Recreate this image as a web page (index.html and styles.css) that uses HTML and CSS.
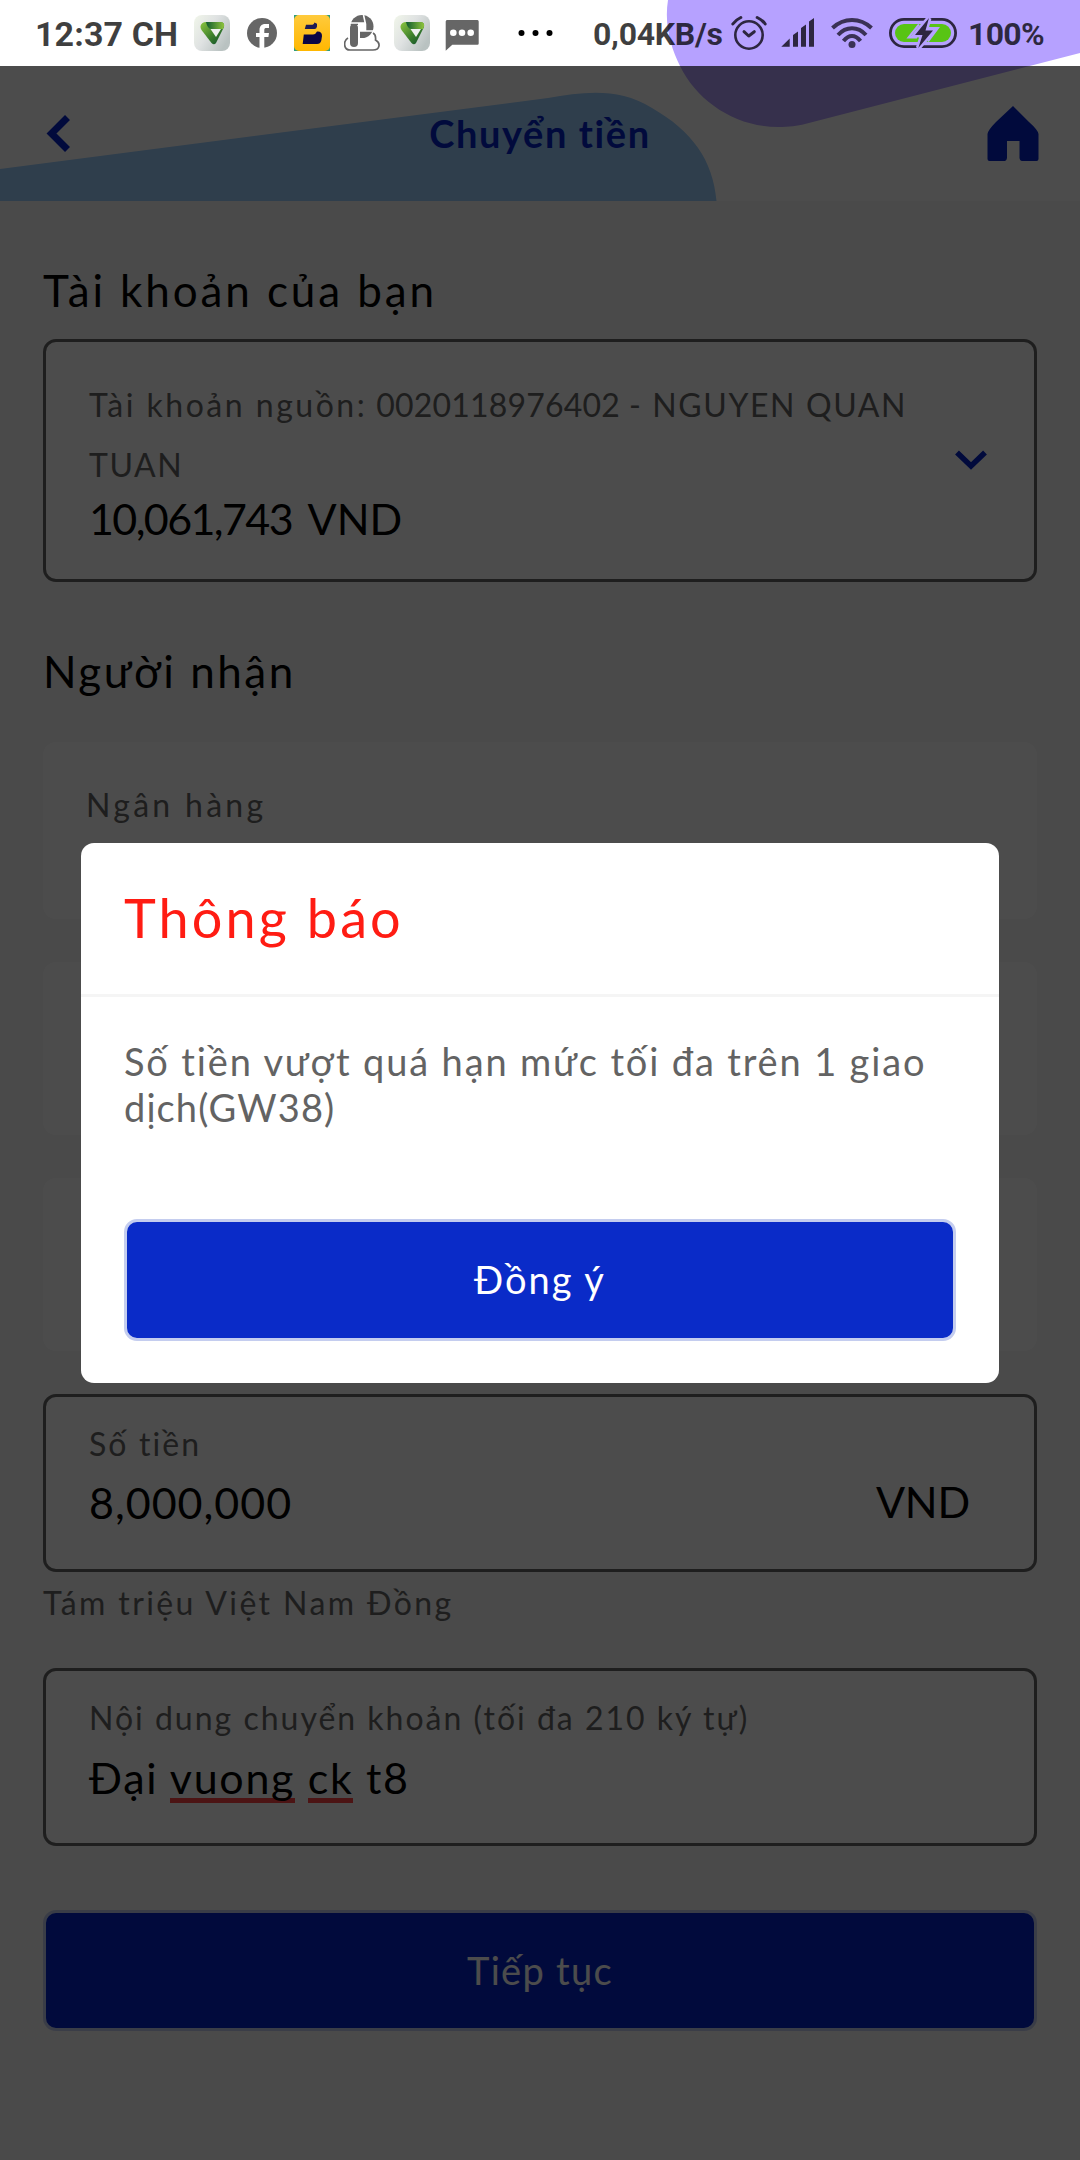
FILE: index.html
```html
<!DOCTYPE html>
<html lang="vi">

<head>
    <meta charset="UTF-8">
    <meta name="viewport" content="width=device-width, initial-scale=1.0">
    <title>Chuyển tiền</title>
    <link rel="stylesheet" href="styles.css">
</head>

<body>
    <svg class="shapes" viewBox="0 0 1080 201">
        <path fill="#9dcffe" d="M0 169 L548 98 C584 92 618 87 652 108 C692 131 713 160 716.500 201 H0 Z" />
        <path fill="#b6a1ff" d="M668 0 C664 25 671 48 680 66 C697 101 735 127 778 127 C790 127 797 126 805 124 L1080 53 V0 Z" />
    </svg>

    <div class="status-bar">
        <span class="time">12:37 CH</span>
        <div class="notifications">
            <svg width="36" height="36">
                <defs>
                    <linearGradient id="plate" x1="0" y1="0" x2="1" y2="0.6">
                        <stop offset="0" stop-color="#f1f6ea" />
                        <stop offset="0.5" stop-color="#dfe2e2" />
                        <stop offset="1" stop-color="#b9c2c1" />
                    </linearGradient>
                    <linearGradient id="leaf" x1="0" y1="0" x2="1" y2="1">
                        <stop offset="0" stop-color="#8cc63f" />
                        <stop offset="0.55" stop-color="#3c7f2c" />
                        <stop offset="1" stop-color="#0b4a2d" />
                    </linearGradient>
                    <linearGradient id="leafTop" x1="0" y1="0" x2="1" y2="0">
                        <stop offset="0" stop-color="#0f5a30" />
                        <stop offset="1" stop-color="#8fc43c" />
                    </linearGradient>
                </defs>
                <g id="vcb">
                    <rect width="36" height="36" rx="8" fill="url(#plate)" />
                    <path fill="url(#leaf)" d="M8.500 8 Q10 7 12 7 H26 Q31 7 30 12 L22 28 Q20 30.500 17.500 28 L7.500 15 Q5 11 8.500 8 Z" />
                    <path fill="url(#leafTop)" d="M12 7 H27 Q31 7.500 29.800 12 L29 14 H17 Q13.500 13.500 12 7 Z" />
                    <path fill="#eef0f0" d="M16.500 14 H27 L22 22 Z" />
                </g>
            </svg>
            <svg width="36" height="36">
                <circle cx="18" cy="18" r="15" fill="#666" />
                <path fill="#fff" d="M15.500 33.500 V22 H12 V18 H15.500 V15 C15.500 11 18 9 21 9 H25 V13 H22.500 C21 13 20.300 13.500 20.300 15 V18 H25 L24.400 22 H20.300 V33.500 Z" />
            </svg>
            <svg width="36" height="36">
                <defs>
                    <linearGradient id="amber" x1="0" y1="0" x2="0" y2="1">
                        <stop offset="0" stop-color="#ffca3c" />
                        <stop offset="1" stop-color="#ffb700" />
                    </linearGradient>
                </defs>
                <rect width="36" height="36" fill="#2f9e7c" />
                <rect width="36" height="36" rx="5" fill="url(#amber)" />
                <path fill="#1c1a55" d="M12 9.800 H18.500 Q20 9.500 20.500 7.500 L23 8.800 V11.500 Q22.500 14 20.500 14 H10.800 Z" />
                <path fill="#0a0645" d="M9.800 19.500 H19 Q22 19 23 16.500 Q28 16 28 21 L27.300 25.500 Q26.500 29 23 29 H8.700 Z" />
            </svg>
            <svg width="36" height="36">
                <circle cx="18" cy="11.500" r="11.500" fill="#666" />
                <path fill="#fff" d="M14 8 H21.500 V16 H14 Z M3 10 H16 V24 H3 Z" />
                <path stroke="#fff" stroke-width="1.600" fill="none" d="M6 8 H22 M19.500 0 L21.500 9 V16 M14 16 H30" />
                <rect x="6" y="9" width="8" height="23" rx="4" fill="#666" />
                <path stroke="#666" stroke-width="1.700" fill="none" d="M4 23 C-1 26 -0.500 35 6 35 H29 C36 35 37 28 31.500 25 C32 21 31 19 29 18" />
            </svg>
            <svg width="36" height="36">
                <use href="#vcb" />
            </svg>
            <svg width="36" height="36">
                <path fill="#666" d="M3 5 H33.500 Q34.700 5 34.700 6.500 V28.500 Q34.700 29.700 33.500 29.700 H8.300 L1.700 35.700 V6.500 Q1.700 5 3 5 Z" />
                <g fill="#fff">
                    <circle cx="9.300" cy="17.800" r="3.300" />
                    <circle cx="18" cy="17.800" r="3.300" />
                    <circle cx="26.700" cy="17.800" r="3.300" />
                </g>
            </svg>
        </div>
        <svg class="dots" width="42" height="12">
            <circle cx="7.500" cy="6" r="3" />
            <circle cx="21.500" cy="6" r="3" />
            <circle cx="35.500" cy="6" r="3" />
        </svg>
        <span class="speed">0,04KB/s</span>
        <svg class="alarm" width="38" height="36" fill="none">
            <circle cx="19" cy="20" r="13.700" stroke-width="2.600" />
            <path stroke-width="3" d="M14 16.700 L18.700 21 L24.300 16.700" />
            <path stroke-width="3" d="M2.800 9 Q5.500 5 10.800 2.500 M27.200 2.500 Q32.500 5 35.200 9" />
        </svg>
        <svg class="signal" width="34" height="36">
            <path d="M0.300 31.700 L8.700 23.500 V31.700 Z M12 20 L17 16.500 V31.700 H12 Z M20 13 L25 9.500 V31.700 H20 Z M28 6.500 L33 3 V31.700 H28 Z" />
        </svg>
        <svg class="wifi" width="44" height="36" fill="none">
            <path d="M2.500 13 Q11 5 22 5 T41.500 13 M8 20 Q14 13.300 22 13.300 T36 20 M13.500 26 Q17.500 21 22 21 T30.500 26" />
            <circle cx="22" cy="29.500" r="3.500" />
        </svg>
        <svg class="battery" width="72" height="36">
            <rect x="3.400" y="4.400" width="65.200" height="27.200" rx="13.600" fill="none" stroke="#2d2640" stroke-width="2.800" />
            <rect x="8" y="9" width="56" height="18" rx="9" fill="#58c414" />
            <path fill="none" stroke="#b6a1ff" stroke-width="2" d="M32 9.500 L21.500 22.500 H30 M42 13 H51 L41 26.500" />
            <path fill="#2d2640" stroke="#b6a1ff" stroke-width="5" paint-order="stroke" d="M42 3 L28 20 H35.500 L31.300 33 L46 15.500 H38.500 Z" />
        </svg>
        <span class="percent">100%</span>
    </div>

    <header class="header">
        <svg class="back" width="30" height="40">
            <path d="M23.500 3.500 L7.500 19.500 L23.500 35.500" />
        </svg>
        <h1>Chuyển tiền</h1>
        <svg class="home" width="52" height="56">
            <path d="M26 0 L42 16 Q51 24 51.500 28 V53 Q51.500 55 49.500 55 H35 Q33 55 32.500 52 V35 H20 V52 Q19.500 55 18 55 H2.500 Q0.500 55 0.500 53 V28 Q1 24 9 16 Z" />
        </svg>
    </header>

    <main class="content">
        <h2 class="title-account">Tài khoản của bạn</h2>
        <div class="box account">
            <div>
                <div class="label account-name">
                    <div class="line">
                        <span class="source">Tài khoản nguồn:</span>
                        <span class="number">0020118976402</span>
                        <span>- NGUYEN QUAN</span>
                    </div>
                    <div class="line"><span>TUAN</span></div>
                </div>
                <div class="value balance"><span class="digits">10,061,743</span> <span>VND</span></div>
            </div>
            <svg class="chevron" width="34" height="24">
                <path d="M2 4.500 L16 18 L30 4.500" />
            </svg>
        </div>

        <h2 class="title-receiver">Người nhận</h2>
        <div class="cards">
            <div class="card bank">
                <div class="label">Ngân hàng</div>
            </div>
            <div class="card"></div>
            <div class="card"></div>
        </div>

        <div class="box field">
            <div class="label amount-label">Số tiền</div>
            <div class="row">
                <span class="value amount">8,000,000</span>
                <span class="value currency">VND</span>
            </div>
        </div>
        <p class="label in-words">Tám triệu Việt Nam Đồng</p>

        <div class="box field">
            <div class="label note-label">Nội dung chuyển khoản (tối đa 210 ký tự)</div>
            <div class="value note">Đại <span class="typo">vuong</span> <span class="typo">ck</span> t8</div>
        </div>

        <button class="btn btn-next">Tiếp tục</button>
    </main>

    <div class="overlay"></div>

    <div class="modal">
        <div class="modal-title">Thông báo</div>
        <div class="modal-body">
            <p>Số tiền vượt quá hạn mức tối đa trên 1 giao</p>
            <p class="code">dịch(GW38)</p>
            <button class="btn btn-ok">Đồng ý</button>
        </div>
    </div>
</body>

</html>
```

FILE: styles.css
```css
* {
    box-sizing: border-box;
}

body {
    position: relative;
    margin: 0;
    width: 1080px;
    height: 2160px;
    overflow: hidden;
    background-color: #f7f7f7;
    background-image: linear-gradient(#fff, #fff);
    background-size: 100% 201px;
    background-repeat: no-repeat;
    font-family: Lato, "Open Sans", sans-serif;
}

h1,
h2,
p {
    margin: 0;
    font-weight: 400;
}

svg {
    display: block;
    flex-shrink: 0;
}

.shapes {
    position: absolute;
    top: 0;
    left: 0;
    width: 1080px;
    height: 201px;
}

/* status bar */
.status-bar {
    position: relative;
    display: flex;
    align-items: center;
    height: 66px;
    font-family: Roboto, sans-serif;
    font-weight: 700;
    color: rgba(0, 0, 0, 0.75);
    white-space: nowrap;
}

.time {
    width: 194px;
    padding: 2px 0 0 35px;
    font-size: 34px;
    letter-spacing: 0.1px;
}

.notifications {
    display: flex;
    gap: 14px;
}

.dots {
    margin-left: 34px;
}

.speed {
    width: 137px;
    margin-left: 37px;
    padding-top: 2px;
    font-size: 32px;
    letter-spacing: -0.3px;
}

.alarm {
    stroke: #2d2640;
    stroke-linecap: round;
    stroke-linejoin: round;
}

.signal {
    margin-left: 13px;
    fill: #2d2640;
}

.wifi {
    margin-left: 15px;
    stroke: #3a3155;
    stroke-width: 4;
}

.wifi circle {
    fill: #3a3155;
    stroke: none;
}

.battery {
    margin-left: 13px;
}

.percent {
    margin-left: 9px;
    padding-top: 2px;
    font-size: 32px;
    letter-spacing: -0.7px;
}

/* header */
.header {
    position: relative;
    display: flex;
    align-items: center;
    justify-content: space-between;
    height: 135px;
    padding: 0 41px 0 44px;
}

.header h1 {
    margin: -2px 0 0 19px;
    font-size: 38px;
    font-weight: 700;
    letter-spacing: 1.6px;
    color: #0424c8;
}

.back,
.chevron {
    fill: none;
    stroke: #0424c8;
}

.back {
    stroke-width: 7;
}

.chevron {
    stroke-width: 5.5;
}

.home {
    fill: #0424c8;
}

/* form */
.content {
    padding: 59px 43px 0;
}

h2 {
    font-size: 44px;
    line-height: 60px;
    color: #000;
}

.title-account {
    letter-spacing: 2.9px;
}

.title-receiver {
    margin: 59px 0 41px;
    letter-spacing: 2.5px;
}

.box {
    width: 994px;
    border: 3px solid #676767;
    border-radius: 13px;
    background-color: #fff;
}

.label {
    font-size: 32px;
    line-height: 60px;
    color: #676767;
}

.value {
    font-size: 43px;
    line-height: 48px;
    color: #000;
}

.account {
    display: flex;
    justify-content: space-between;
    height: 243px;
    margin-top: 19px;
    padding: 33px 45px 0 43px;
}

.account-name {
    width: 840px;
    letter-spacing: 1.6px;
}

.line {
    display: flex;
    gap: 9px;
}

.source {
    letter-spacing: 2.5px;
}

.number {
    letter-spacing: 0.2px;
}

.balance {
    word-spacing: 6px;
}

.digits {
    letter-spacing: -1.6px;
}

.chevron {
    margin-top: 73px;
}

.cards {
    display: grid;
    gap: 43px;
    margin-bottom: 43px;
}

.card {
    height: 173px;
    border-radius: 13px;
    background-color: #fff;
}

.bank {
    height: 177px;
    padding: 33px 43px 0;
    letter-spacing: 3.3px;
}

.field {
    height: 178px;
    padding: 17px 64px 0 43px;
}

.row {
    display: flex;
    justify-content: space-between;
    margin-top: 4px;
}

.amount-label {
    letter-spacing: 2.1px;
}

.amount {
    padding-top: 1px;
    letter-spacing: 1px;
}

.currency {
    letter-spacing: -0.2px;
}

.in-words {
    margin: 1px 0 35px;
    letter-spacing: 2.4px;
}

.note-label {
    letter-spacing: 2px;
}

.note {
    margin-top: 6px;
    letter-spacing: 1.7px;
    word-spacing: -0.2px;
}

.typo {
    background: linear-gradient(#ff4444, #ff4444) 0 100% / 100% 5px no-repeat;
}

.btn {
    display: block;
    width: 100%;
    padding: 0;
    border: 3px solid #c4cdef;
    border-radius: 13px;
    background-color: #0a2bc8;
    font-family: inherit;
    font-size: 38px;
    color: #fff;
}

.btn-next {
    height: 121px;
    margin-top: 64px;
    padding-bottom: 2px;
    background-color: #0424c8;
    letter-spacing: 1.3px;
}

/* everything under the status bar is dimmed */
.overlay {
    position: absolute;
    top: 66px;
    left: 0;
    right: 0;
    bottom: 0;
    background-color: rgba(0, 0, 0, 0.7);
}

.modal {
    position: absolute;
    top: 843px;
    left: 81px;
    width: 918px;
    height: 540px;
    border-radius: 13px;
    background-color: #fff;
}

.modal-title {
    height: 154px;
    padding: 45px 43px 0;
    border-bottom: 3px solid #f5f5f5;
    font-size: 54px;
    line-height: 60px;
    letter-spacing: 3.1px;
    color: #ff1c13;
}

.modal-body {
    padding: 41px 43px 0;
}

.modal-body p {
    font-size: 38px;
    line-height: 46px;
    letter-spacing: 1.85px;
    color: #636363;
}

.modal-body .code {
    letter-spacing: 1.1px;
}

.btn-ok {
    height: 122px;
    margin-top: 89px;
    padding-bottom: 3px;
    letter-spacing: 2px;
}
```
